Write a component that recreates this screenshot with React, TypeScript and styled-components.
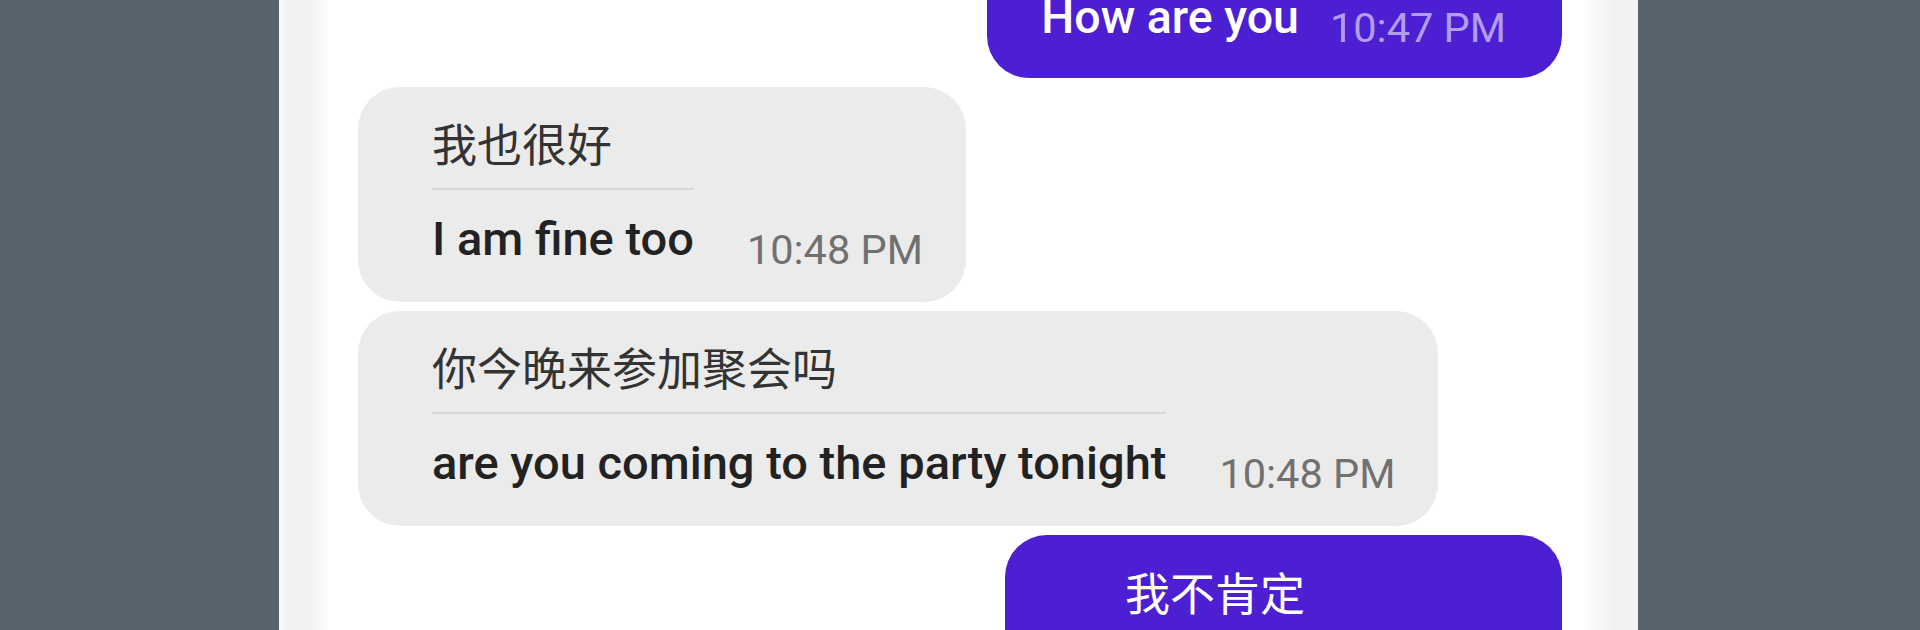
import styled, { createGlobalStyle } from "styled-components";

type Message = {
	id: number;
	out: boolean;
	original?: string;
	text: string;
	time: string;
};

const messages: Message[] = [
	{ id: 1, out: true, text: "How are you", time: "10:47 PM" },
	{ id: 2, out: false, original: "我也很好", text: "I am fine too", time: "10:48 PM" },
	{ id: 3, out: false, original: "你今晚来参加聚会吗", text: "are you coming to the party tonight", time: "10:48 PM" },
	{ id: 4, out: true, original: "我不肯定", text: "Not sure", time: "10:49 PM" },
];

export default function App() {
	return (
		<>
			<GlobalStyle />
			<Page>
				<Phone>
					<Screen>
						<List>
							{messages.map((m) => (
								<Bubble key={m.id} $out={m.out} $translated={!!m.original}>
									<Body $out={m.out}>
										<Column>
											{m.original && (
												<>
													<Original $out={m.out}>{m.original}</Original>
													<Divider $out={m.out} />
												</>
											)}
											<Text $out={m.out}>{m.text}</Text>
										</Column>
										<Time $out={m.out}>{m.time}</Time>
									</Body>
								</Bubble>
							))}
						</List>
					</Screen>
				</Phone>
			</Page>
		</>
	);
}

const GlobalStyle = createGlobalStyle`
	html, body {
		margin: 0;
		padding: 0;
		height: 630px;
		overflow: hidden;
		background: #56636c;
	}
	#root {
		height: 630px;
	}
	* {
		box-sizing: border-box;
	}
`;

const Page = styled.div`
	height: 630px;
	display: flex;
	padding-left: 279px;
	background: #56636c;
`;

const Phone = styled.div`
	width: 1359px;
	height: 100%;
	display: flex;
	padding: 0 53px 0 49px;
	background: linear-gradient(
		to right,
		#fbfbfc 0,
		#f0f1f2 10px,
		#f1f2f3 30px,
		#f9fafa 46px,
		#ffffff 49px,
		#ffffff calc(100% - 53px),
		#f9fafa calc(100% - 48px),
		#f0f1f2 calc(100% - 22px),
		#f3f4f5 100%
	);
`;

const Screen = styled.div`
	flex: 1;
	background: #ffffff;
	overflow: hidden;
	padding: 0 23px 0 30px;
`;

const List = styled.div`
	display: flex;
	flex-direction: column;
	gap: 9px;
	margin-top: -44px;
`;

const Bubble = styled.div<{ $out: boolean; $translated: boolean }>`
	align-self: ${(p) => (p.$out ? "flex-end" : "flex-start")};
	background: ${(p) => (p.$out ? "#4c1fd3" : "#ebebeb")};
	border-radius: 42px;
	padding: ${(p) =>
		!p.$out
			? "29px 43px 36px 74px"
			: p.$translated
			? "30px 50px 34px 120px"
			: "34px 56px 34px 54px"};
`;

const Body = styled.div<{ $out: boolean }>`
	display: flex;
	align-items: flex-end;
	gap: ${(p) => (p.$out ? "31px" : "53px")};
`;

const Column = styled.div`
	display: flex;
	flex-direction: column;
`;

const Original = styled.div<{ $out: boolean }>`
	font-family: "Noto Sans CJK SC", sans-serif;
	font-size: 45px;
	line-height: 54px;
	color: ${(p) => (p.$out ? "#ffffff" : "#333333")};
	white-space: nowrap;
`;

const Divider = styled.div<{ $out: boolean }>`
	height: 2px;
	margin: 18px 0 22px;
	background: ${(p) => (p.$out ? "#7a58e0" : "#d8d8d8")};
`;

const Text = styled.div<{ $out: boolean }>`
	font-family: Roboto, "Noto Sans", sans-serif;
	font-size: ${(p) => (p.$out ? "46.5px" : "47px")};
	font-weight: 500;
	line-height: 54px;
	color: ${(p) => (p.$out ? "#ffffff" : "#222222")};
	white-space: nowrap;
`;

const Time = styled.div<{ $out: boolean }>`
	font-family: Roboto, "Noto Sans", sans-serif;
	font-size: 41.5px;
	line-height: 48px;
	margin-bottom: -8px;
	color: ${(p) => (p.$out ? "#b39df2" : "#707070")};
	white-space: nowrap;
`;
